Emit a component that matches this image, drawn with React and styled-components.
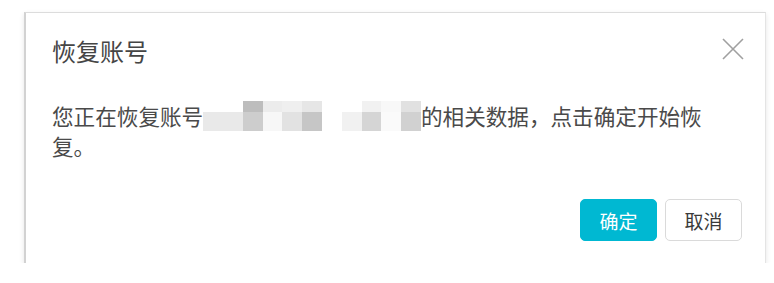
import React from "react";
import styled, { createGlobalStyle } from "styled-components";

const GlobalStyle = createGlobalStyle`
  html, body {
    margin: 0;
    padding: 0;
    background: #ffffff;
  }
  body {
    font-family: "Noto Sans CJK SC", "Noto Sans", sans-serif;
  }
`;

const mosaic = [
  ["#ffffff", "#e9e9e9"],
  ["#ffffff", "#e9e9e9"],
  ["#bdbdbd", "#cdcdcd"],
  ["#ececec", "#f7f7f7"],
  ["#efefef", "#e2e2e2"],
  ["#e6e6e6", "#c6c6c6"],
  ["#ffffff", "#ffffff"],
  ["#ffffff", "#f1f1f1"],
  ["#f1f1f1", "#d5d5d5"],
  ["#f8f8f8", "#fafafa"],
  ["#e1e1e1", "#d1d1d1"],
];

export default function App() {
  return (
    <>
      <GlobalStyle />
      <Page>
        <Dialog>
          <Header>
            <Title>恢复账号</Title>
            <CloseButton aria-label="close">
              <svg width="22" height="22" viewBox="0 0 22 22">
                <path d="M1 1 L21 21 M21 1 L1 21" stroke="#a0a0a0" strokeWidth="1.6" fill="none" />
              </svg>
            </CloseButton>
          </Header>
          <Body>
            您正在恢复账号
            <Mosaic>
              {mosaic.map((c, i) => (
                <Cell key={"t" + i} $color={c[0]} />
              ))}
              {mosaic.map((c, i) => (
                <Cell key={"b" + i} $color={c[1]} />
              ))}
            </Mosaic>
            的相关数据，点击确定开始恢复。
          </Body>
          <Footer>
            <Button $primary>确定</Button>
            <Button>取消</Button>
          </Footer>
        </Dialog>
      </Page>
    </>
  );
}

const Page = styled.div`
  padding: 12px 8px 0 24px;
`;

const Dialog = styled.div`
  width: 742px;
  height: 251px;
  box-sizing: border-box;
  background: #ffffff;
  border-top: 1px solid #dcdcdc;
  border-left: 2px solid #d2d2d2;
  border-right: 1px solid #e4e4e4;
  box-shadow: 0 2px 5px rgba(0, 0, 0, 0.1);
  display: flex;
  flex-direction: column;
`;

const Header = styled.div`
  display: flex;
  justify-content: space-between;
  align-items: flex-start;
  padding: 23px 21px 0 26px;
`;

const Title = styled.h2`
  margin: 0;
  font-size: 24px;
  font-weight: 400;
  line-height: 30px;
  color: #454545;
`;

const CloseButton = styled.button`
  border: none;
  background: none;
  padding: 0;
  margin-top: 2px;
  width: 22px;
  height: 22px;
  display: flex;
  cursor: pointer;
`;

const Body = styled.div`
  margin: 35px 0 0 26px;
  width: 660px;
  font-size: 21.6px;
  line-height: 30px;
  color: #4a4a4a;
`;

const Mosaic = styled.span`
  display: inline-grid;
  grid-template-columns: repeat(11, 19.8px);
  grid-template-rows: 11px 19px;
  height: 30px;
  vertical-align: top;
`;

const Cell = styled.span`
  background: ${(p) => p.$color};
`;

const Footer = styled.div`
  margin-top: auto;
  display: flex;
  justify-content: flex-end;
  gap: 8px;
  padding: 0 23px 22px 0;
`;

const Button = styled.button`
  width: 77px;
  height: 42px;
  border-radius: 5px;
  font-family: "Noto Sans CJK SC", "Noto Sans", sans-serif;
  font-size: 19px;
  cursor: pointer;
  border: 1px solid ${(p) => (p.$primary ? "#00b8d2" : "#dadada")};
  background: ${(p) => (p.$primary ? "#00b8d2" : "#ffffff")};
  color: ${(p) => (p.$primary ? "#ffffff" : "#3a3a3a")};
`;
